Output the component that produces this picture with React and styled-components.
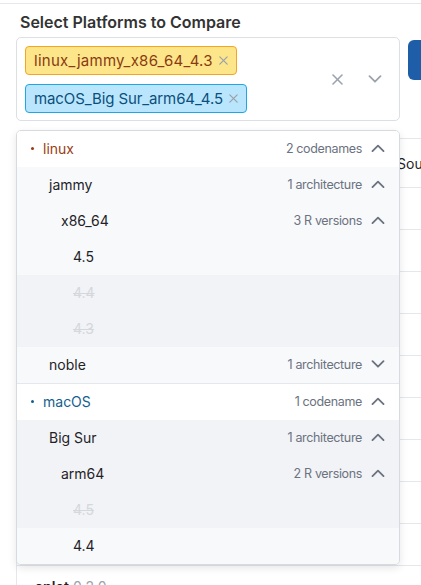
import React from "react";
import styled, { createGlobalStyle } from "styled-components";

const Global = createGlobalStyle`
  html, body { margin: 0; padding: 0; background: #fff; }
  body { font-family: Inter, "Noto Sans", sans-serif; color: #1f2328; overflow: hidden; width: 421px; height: 585px; }
  * { box-sizing: border-box; }
`;

const Page = styled.div`
  width: 421px;
  height: 585px;
  overflow: hidden;
  position: relative;
`;

const TopRule = styled.div`
  height: 4px;
  border-bottom: 1px solid #e5e7eb;
`;

const Body = styled.div`
  padding: 0 0 0 16px;
  width: 700px;
`;

const Title = styled.h2`
  margin: 8px 0 5px 4px;
  font-size: 16px;
  line-height: 20px;
  font-weight: 600;
  color: #333;
`;

const Controls = styled.div`
  display: flex;
  align-items: flex-start;
  gap: 8px;
`;

const SelectWrap = styled.div`
  position: relative;
  width: 384px;
  z-index: 2;
`;

const SelectBox = styled.div`
  height: 84px;
  border: 1px solid #dcdfe4;
  border-radius: 5px;
  background: #fff;
  display: flex;
  align-items: center;
  padding: 7px 8px;
`;

const Tags = styled.div`
  flex: 1;
  display: flex;
  flex-direction: column;
  align-items: flex-start;
  gap: 9px;
`;

const Tag = styled.span`
  display: inline-flex;
  align-items: center;
  gap: 6px;
  height: 29px;
  padding: 0 8px;
  border-radius: 4px;
  font-size: 15px;
  letter-spacing: ${(p) => (p.$tone === "amber" ? "0.25px" : "-0.1px")};
  background: ${(p) => (p.$tone === "amber" ? "#fde68a" : "#bae6fd")};
  border: 1px solid ${(p) => (p.$tone === "amber" ? "#f5a524" : "#1ea7e4")};
  color: ${(p) => (p.$tone === "amber" ? "#8a3b12" : "#0b4f7c")};
`;

const TagX = styled.span`
  display: inline-flex;
`;

const Indicators = styled.div`
  display: flex;
  align-items: center;
  gap: 25px;
  padding-right: 9px;
  color: #9ca3af;
`;

const BlueButton = styled.div`
  margin-top: 3px;
  width: 80px;
  height: 40px;
  border-radius: 6px;
  background: #1e5ea8;
`;

const Menu = styled.div`
  position: absolute;
  top: calc(100% + 9px);
  left: 0;
  width: 384px;
  background: #fff;
  border: 1px solid #d7dbe0;
  border-radius: 5px;
  box-shadow: 0 3px 8px rgba(0, 0, 0, 0.1);
  overflow: hidden;
`;

const Group = styled.div`
  & + & { border-top: 1px solid #e4e7eb; }
`;

const Row = styled.div`
  height: 36px;
  display: flex;
  align-items: center;
  padding-left: ${(p) => (p.$level === 0 ? 14 : 20 + 12 * p.$level)}px;
  padding-right: 14px;
  padding-bottom: 2px;
  background: ${(p) => (p.$bg === "white" ? "#fff" : p.$bg === "dim" ? "#f2f3f6" : "#f8f9fb")};
`;

const Bullet = styled.span`
  width: 3px;
  height: 3px;
  border-radius: 50%;
  background: ${(p) => p.$color};
  margin-right: 9px;
`;

const Label = styled.span`
  flex: 1;
  font-size: 14px;
  color: ${(p) => (p.$disabled ? "#d4d7dc" : p.$color || "#1f2328")};
  text-decoration: ${(p) => (p.$disabled ? "line-through" : "none")};
`;

const Count = styled.span`
  font-size: 12.5px;
  letter-spacing: -0.35px;
  color: #6b7280;
  margin-right: 9px;
`;

const Table = styled.div`
  margin-top: 17px;
  border: 1px solid #e4e7eb;
  border-right: none;
`;

const TRow = styled.div`
  display: grid;
  grid-template-columns: 368px 300px;
  height: ${(p) => (p.$head ? 49 : 42)}px;
  align-items: center;
  border-bottom: 1px solid #e4e7eb;
`;

const Cell = styled.div`
  padding: 0 12px 0 ${(p) => (p.$first ? 18 : 12)}px;
  font-size: 14px;
  color: #1f2328;
  white-space: nowrap;
`;

const Pkg = styled.span`
  font-weight: 600;
`;

const Ver = styled.span`
  color: #9ca3af;
  margin-left: 4px;
`;

const Chevron = ({ up, color = "#6b7280", w = 14 }) => (
  <svg width={w} height={w * 0.6} viewBox="0 0 14 8" fill="none" stroke={color} strokeWidth="1.8" strokeLinecap="round" strokeLinejoin="round">
    {up ? <polyline points="1.5,7 7,1.5 12.5,7" /> : <polyline points="1.5,1 7,6.5 12.5,1" />}
  </svg>
);

const Cross = ({ color = "#9ca3af", s = 11, sw = 1.6 }) => (
  <svg width={s} height={s} viewBox="0 0 11 11" stroke={color} strokeWidth={sw} strokeLinecap="round">
    <line x1="1" y1="1" x2="10" y2="10" />
    <line x1="10" y1="1" x2="1" y2="10" />
  </svg>
);

const groups = [
  {
    color: "#9a3d12",
    rows: [
      { level: 0, label: "linux", count: "2 codenames", open: true, bg: "white" },
      { level: 1, label: "jammy", count: "1 architecture", open: true },
      { level: 2, label: "x86_64", count: "3 R versions", open: true },
      { level: 3, label: "4.5" },
      { level: 3, label: "4.4", disabled: true, bg: "dim" },
      { level: 3, label: "4.3", disabled: true, bg: "dim" },
      { level: 1, label: "noble", count: "1 architecture", open: false },
    ],
  },
  {
    color: "#155f8f",
    rows: [
      { level: 0, label: "macOS", count: "1 codename", open: true, bg: "white" },
      { level: 1, label: "Big Sur", count: "1 architecture", open: true, bg: "dim" },
      { level: 2, label: "arm64", count: "2 R versions", open: true, bg: "dim" },
      { level: 3, label: "4.5", disabled: true, bg: "dim" },
      { level: 3, label: "4.4" },
    ],
  },
];

export default function App() {
  return (
    <Page>
      <Global />
      <TopRule />
      <Body>
        <Title>Select Platforms to Compare</Title>
        <Controls>
          <SelectWrap>
            <SelectBox>
              <Tags>
                <Tag $tone="amber">linux_jammy_x86_64_4.3<TagX><Cross s={9} sw={1.5} color="#9aa1ab" /></TagX></Tag>
                <Tag $tone="sky">macOS_Big Sur_arm64_4.5<TagX><Cross s={9} sw={1.5} color="#9aa1ab" /></TagX></Tag>
              </Tags>
              <Indicators>
                <Cross />
                <Chevron color="#9ca3af" w={14} />
              </Indicators>
            </SelectBox>
            <Menu>
              {groups.map((g, gi) => (
                <Group key={gi}>
                  {g.rows.map((r, ri) => (
                    <Row key={ri} $level={r.level} $bg={r.bg}>
                      {r.level === 0 && <Bullet $color={g.color} />}
                      <Label $disabled={r.disabled} $color={r.level === 0 ? g.color : undefined}>
                        {r.label}
                      </Label>
                      {r.count && (
                        <>
                          <Count>{r.count}</Count>
                          <Chevron up={r.open} />
                        </>
                      )}
                    </Row>
                  ))}
                </Group>
              ))}
            </Menu>
          </SelectWrap>
          <BlueButton />
        </Controls>
        <Table>
          <TRow $head>
            <Cell $first />
            <Cell>Source</Cell>
          </TRow>
          {Array.from({ length: 9 }).map((_, i) => (
            <TRow key={i}>
              <Cell $first />
              <Cell />
            </TRow>
          ))}
          <TRow>
            <Cell $first>
              <Pkg>aplot</Pkg>
              <Ver>0.2.0</Ver>
            </Cell>
            <Cell />
          </TRow>
        </Table>
      </Body>
    </Page>
  );
}
